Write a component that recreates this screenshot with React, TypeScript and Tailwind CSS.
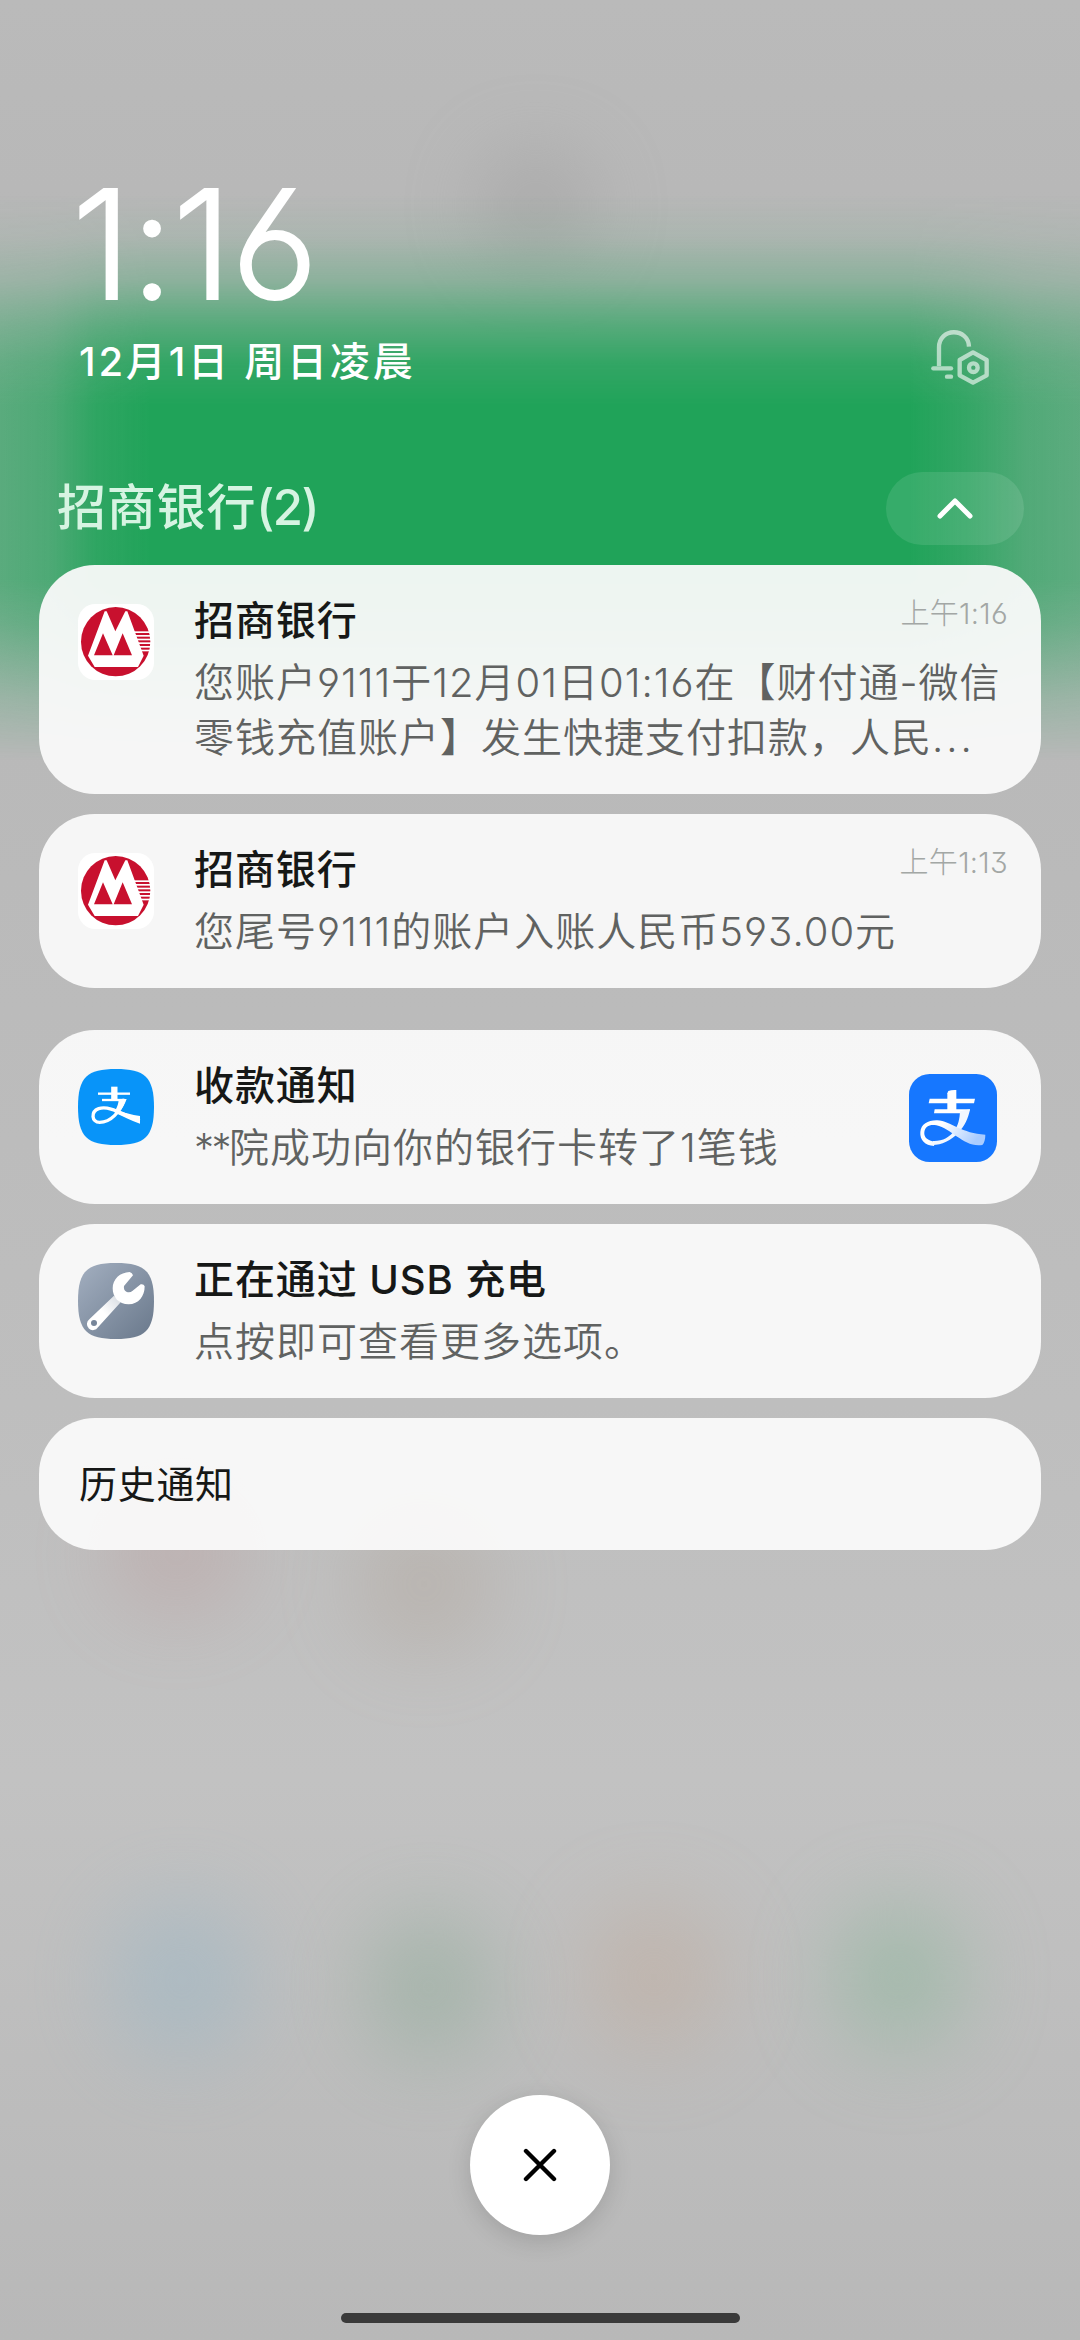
import React from 'react';

interface Notification {
  id: number;
  icon: React.ReactNode;
  title: string;
  lines: React.ReactNode[];
  time?: string;
  picture?: React.ReactNode;
}

function BankIcon() {
  return (
    <svg viewBox="0 0 228 228" className="size-[76px]">
      <rect width="228" height="228" rx="52" fill="#fff" />
      <circle cx="113" cy="113" r="104" fill="#c8102e" />
      <path d="M30 155 L80 22 H86 L112 82 L142 22 H148 L197 155 L180 189 L50 189 Z" fill="#fff" />
      <path d="M75 88 L48 154 L104 154 Z M134 88 L107 154 L162 154 Z" fill="#c8102e" />
      <g fill="#fff">
        <rect x="168" y="82" width="56" height="5" />
        <rect x="172" y="93" width="56" height="5" />
        <rect x="176" y="104" width="52" height="5" />
        <rect x="180" y="115" width="48" height="5" />
        <rect x="184" y="126" width="40" height="5" />
        <rect x="188" y="137" width="34" height="5" />
      </g>
    </svg>
  );
}

function PayIcon() {
  return (
    <svg viewBox="0 0 228 228" className="size-[76px]">
      <path d="M114 0 C200 0 228 24 228 114 S200 228 114 228 S0 204 0 114 S28 0 114 0Z" fill="#0894f9" />
      <g fill="none" stroke="#fff">
        <path d="M109 53 V90" strokeWidth="19" />
        <path d="M60 74 H156" strokeWidth="7" />
        <path d="M72 93 H141" strokeWidth="7" />
        <path d="M139 90 C126 130 98 160 65 160 C40 160 38 128 62 119 C95 108 135 138 185 156" strokeWidth="10" />
      </g>
      <path d="M112 124 C140 130 160 138 186 141 V164 C160 155 135 141 110 131Z M122 90 H146 C141 104 133 119 124 129 L113 122 C118 113 122 102 122 90Z" fill="#fff" />
    </svg>
  );
}

function PayLargeIcon() {
  return (
    <svg viewBox="0 0 264 264" className="size-[88px]">
      <defs>
        <linearGradient id="payTail" x1="0" x2="1" y1="0" y2="0.3">
          <stop offset="0.35" stopColor="#fff" />
          <stop offset="1" stopColor="#a9ccff" />
        </linearGradient>
      </defs>
      <rect width="264" height="264" rx="62" fill="#1677ff" />
      <path d="M118 51 Q128 47 142 48 V110 H115 V58Z" fill="#fff" />
      <path d="M62 74 H198 L195 88 H59Z M77 106 H183 Q181 112 178 118 H75Z" fill="#fff" />
      <path d="M183 106 C178 135 165 158 150 174 C125 202 95 214 68 213 L72 201 C100 202 122 190 138 168 C148 152 152 135 153 112Z" fill="#f2f7ff" />
      <path d="M75 216 C48 214 32 198 34 174 C36 150 58 138 85 139 C125 141 160 180 229 182 C229 196 226 206 220 213 C165 222 130 164 82 154 C62 150 48 158 46 174 C44 190 56 200 78 203Z" fill="url(#payTail)" />
    </svg>
  );
}

function WrenchIcon() {
  return (
    <svg viewBox="0 0 228 228" className="size-[76px]">
      <defs>
        <linearGradient id="toolBg" x1="0" y1="0" x2="1" y2="1">
          <stop offset="0" stopColor="#a3afc0" />
          <stop offset="1" stopColor="#69788b" />
        </linearGradient>
        <linearGradient id="toolHandle" x1="1" y1="0" x2="0" y2="1">
          <stop offset="0" stopColor="#d5dae0" />
          <stop offset="0.5" stopColor="#fff" />
        </linearGradient>
      </defs>
      <path d="M114 0 C200 0 228 24 228 114 S200 228 114 228 S0 204 0 114 S28 0 114 0Z" fill="url(#toolBg)" />
      <path d="M108 98 L34 169 A18 18 0 1 0 60 193 L128 118Z" fill="url(#toolHandle)" />
      <path d="M155 27 Q163 29 165 37 L138 69 Q136 81 145 86 Q155 91 163 84 L188 64 Q197 62 200 70 C200 100 182 124 152 124 C122 124 104 103 104 76 C104 48 126 28 155 27Z" fill="#fff" />
      <circle cx="48" cy="180" r="9" fill="#77869a" />
    </svg>
  );
}

function BellSettingsIcon() {
  return (
    <svg viewBox="0 0 174 165" className="h-[55px] w-[58px] opacity-60" fill="none" stroke="#fff" strokeWidth="13" strokeLinecap="round">
      <path d="M24 108 V52 C24 -8 112 -8 114 50" strokeLinecap="butt" />
      <path d="M7 115 H60" />
      <path d="M48 140 H60" />
      <path d="M126 67 L167 90 V136 L126 158 L86 136 V90 Z" strokeLinejoin="round" />
      <circle cx="127" cy="113" r="13" />
    </svg>
  );
}

// Blurred home screen behind the shade
function Wallpaper() {
  return (
    <div className="absolute inset-0 -z-10 overflow-hidden bg-[linear-gradient(180deg,#bababa_0%,#b7b7b7_12%,#b9b9b9_32%,#bebebe_60%,#c2c2c2_76%,#bdbdbd_88%,#b8b8b8_100%)]">
      <div className="absolute left-[105px] top-[1490px] h-32 w-36 rounded-full bg-[#b57a7a] opacity-20 blur-[40px]" />
      <div className="absolute left-[360px] top-[1520px] h-32 w-32 rounded-full bg-[#a08873] opacity-25 blur-[44px]" />
      <div className="absolute left-[110px] top-[1900px] h-40 w-36 rounded-full bg-[#8fb4c8] opacity-40 blur-[42px]" />
      <div className="absolute left-[365px] top-[1915px] h-36 w-32 rounded-full bg-[#86a892] opacity-45 blur-[42px]" />
      <div className="absolute left-[590px] top-[1905px] h-36 w-32 rounded-full bg-[#c2a088] opacity-35 blur-[44px]" />
      <div className="absolute left-[835px] top-[1905px] h-36 w-32 rounded-full bg-[#86b597] opacity-50 blur-[42px]" />
      <div className="absolute left-[480px] top-[150px] h-28 w-28 rounded-full bg-[#8f8f8f] opacity-35 blur-[40px]" />
      <div className="absolute inset-x-0 top-[195px] h-[565px] [mask-image:linear-gradient(180deg,transparent_0,rgba(0,0,0,0.08)_42px,rgba(0,0,0,0.28)_85px,rgba(0,0,0,0.65)_132px,rgba(0,0,0,0.88)_168px,#000_210px,#000_385px,rgba(0,0,0,0.8)_430px,rgba(0,0,0,0.3)_505px,transparent_565px)]">
        <div className="h-full bg-[linear-gradient(90deg,rgba(32,163,89,0.62)_0,rgba(32,163,89,0.7)_50px,rgba(32,163,89,0.9)_95px,#20a359_150px,#20a359_910px,rgba(32,163,89,0.88)_965px,rgba(32,163,89,0.68)_1025px,rgba(32,163,89,0.6)_1080px)]" />
      </div>
    </div>
  );
}

function NotificationCard({ icon, title, lines, time, picture }: Omit<Notification, 'id'>) {
  return (
    <div className="flex rounded-[56px] bg-[rgba(250,250,250,0.945)] pb-[29px] pl-[39px] pt-7">
      <div className="w-[116px] shrink-0 pt-[11px]">{icon}</div>
      <div className="min-w-0 flex-1">
        <div className="flex h-14 items-center justify-between">
          <h3 className="whitespace-nowrap text-[40px] font-medium tracking-[0.9px] text-[#161817]">{title}</h3>
          {time && <span className="mr-[33px] -mt-3.5 text-[29px] font-light tracking-[0.3px] text-[#a3a7a5]">{time}</span>}
        </div>
        <div className="mt-1.5 text-[40px] font-[350] leading-[55px] tracking-[1px] text-[#606261]">
          {lines.map((line, i) => (
            <p key={i} className="h-[55px] whitespace-nowrap">{line}</p>
          ))}
        </div>
      </div>
      {picture && <div className="mr-11 flex items-center pt-0.5">{picture}</div>}
    </div>
  );
}

const bankNotifications: Notification[] = [
  {
    id: 1,
    icon: <BankIcon />,
    title: '招商银行',
    lines: [
      '您账户9111于12月01日01:16在【财付通-微信',
      <>零钱充值账户】发生快捷支付扣款，人民<span className="tracking-[3px]">...</span></>,
    ],
    time: '上午1:16',
  },
  {
    id: 2,
    icon: <BankIcon />,
    title: '招商银行',
    lines: ['您尾号9111的账户入账人民币593.00元'],
    time: '上午1:13',
  },
];

const otherNotifications: Notification[] = [
  {
    id: 3,
    icon: <PayIcon />,
    title: '收款通知',
    lines: [<><span className="tracking-[-2.5px]">**</span>院成功向你的银行卡转了1笔钱</>],
    picture: <PayLargeIcon />,
  },
  {
    id: 4,
    icon: <WrenchIcon />,
    title: '正在通过 USB 充电',
    lines: ['点按即可查看更多选项。'],
  },
];

export default function App() {
  return (
    <div
      lang="zh-CN"
      className="relative isolate flex h-[2340px] w-[1080px] flex-col overflow-hidden font-[Inter,'Noto_Sans_CJK_SC',sans-serif] [font-feature-settings:'ss01']"
    >
      <Wallpaper />

      <header className="flex h-[390px] items-end justify-between pl-[79px] pr-[91px]">
        <div>
          <div className="-ml-[7px] flex h-[150px] items-center text-[151px] font-[360] leading-none tracking-[-0.7px] text-white [-webkit-text-stroke:1.8px_#fff]">
            1:16
          </div>
          <div className="mt-[15px] h-14 whitespace-nowrap text-[40px] font-[450] leading-[56px] tracking-[2.8px] text-white">
            12月1日 周日凌晨
          </div>
        </div>
        <div className="mb-[5px]">
          <BellSettingsIcon />
        </div>
      </header>

      <div className="mt-[82px] flex h-[73px] items-center justify-between pl-[57px] pr-14">
        <h2 className="-mt-0.5 text-[49px] font-[450] tracking-[0.8px] text-[#d6f4e2]">
          招商银行<span className="tracking-[-1.5px]">(2)</span>
        </h2>
        <button className="flex h-[73px] w-[138px] items-center justify-center rounded-full bg-white/10">
          <svg viewBox="0 0 36 21" className="h-[21px] w-9" fill="none" stroke="#fff" strokeWidth="5" strokeLinecap="round" strokeLinejoin="round">
            <path d="M3 18 L18 3 L33 18" />
          </svg>
        </button>
      </div>

      <main className="mt-5 flex flex-col gap-[42px] px-[39px]">
        <section className="flex flex-col gap-5">
          {bankNotifications.map(({ id, ...item }) => (
            <NotificationCard key={id} {...item} />
          ))}
        </section>
        <section className="flex flex-col gap-5">
          {otherNotifications.map(({ id, ...item }) => (
            <NotificationCard key={id} {...item} />
          ))}
          <div className="flex h-[132px] items-center rounded-[56px] bg-[rgba(250,250,250,0.945)] px-10 text-[38px] tracking-[0.7px] text-[#161817]">
            历史通知
          </div>
        </section>
      </main>

      <footer className="mt-auto flex flex-col items-center pb-[17px]">
        <button className="flex size-[140px] items-center justify-center rounded-full bg-white shadow-[0_6px_24px_rgba(0,0,0,0.14)]">
          <svg viewBox="0 0 34 34" className="size-[34px]" fill="none" stroke="#000" strokeWidth="4.4" strokeLinecap="round">
            <path d="M3 3 L31 31 M31 3 L3 31" />
          </svg>
        </button>
        <div className="mt-[78px] h-2.5 w-[399px] rounded-full bg-[#3a3a3a]" />
      </footer>
    </div>
  );
}
